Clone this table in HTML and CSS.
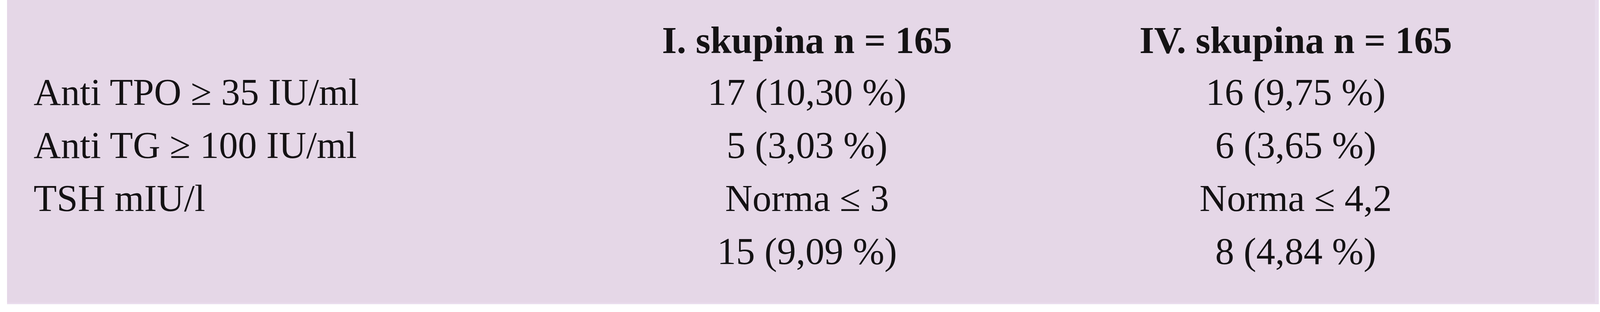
FILE: index.html
```html
<!DOCTYPE html>
<html lang="cs">
<head>
<meta charset="utf-8">
<title>Tabulka</title>
<link rel="stylesheet" href="styles.css">
</head>
<body>
<div class="panel">
  <div class="table">
    <div class="cell head"></div>
    <div class="cell head num">I. skupina n = 165</div>
    <div class="cell head num">IV. skupina n = 165</div>

    <div class="cell label">Anti TPO ≥ 35 IU/ml</div>
    <div class="cell num">17 (10,30 %)</div>
    <div class="cell num">16 (9,75 %)</div>

    <div class="cell label">Anti TG ≥ 100 IU/ml</div>
    <div class="cell num">5 (3,03 %)</div>
    <div class="cell num">6 (3,65 %)</div>

    <div class="cell label">TSH mIU/l</div>
    <div class="cell num">Norma ≤ 3</div>
    <div class="cell num">Norma ≤ 4,2</div>

    <div class="cell label"></div>
    <div class="cell num">15 (9,09 %)</div>
    <div class="cell num">8 (4,84 %)</div>
  </div>
</div>
</body>
</html>
```
FILE: styles.css
```css
html, body {
  margin: 0;
  padding: 0;
  background: #ffffff;
}

.panel {
  margin-left: 18px;
  width: 4075px;
  height: 780px;
  box-sizing: border-box;
  background: #e5d7e7;
  box-shadow: inset -22px -16px 0 -12px #e9dded;
  font-family: "Liberation Serif", "Times New Roman", serif;
  color: #141214;
}

.table {
  display: grid;
  grid-template-columns: 1480px 1000px 1502px;
  grid-template-rows: 130px;
  grid-auto-rows: 136px;
  padding: 39px 0 0 68px;
  font-size: 97px;
  line-height: 136px;
}

.cell {
  white-space: nowrap;
}

.head {
  font-weight: bold;
  line-height: 130px;
}

.num {
  text-align: center;
}
```
